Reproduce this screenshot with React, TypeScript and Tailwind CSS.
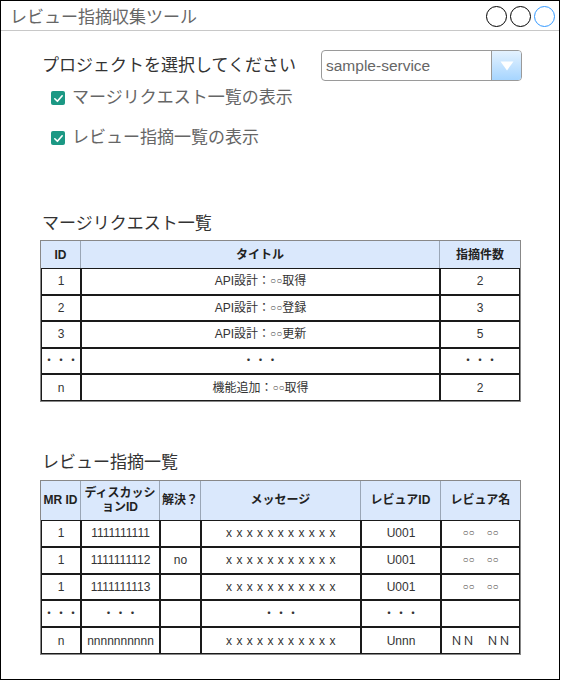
import React from "react";

const Circ = () => <span className="text-[10px] leading-none text-[#444]">○○</span>;

function Checkbox() {
  return (
    <span className="w-[14px] h-[14px] rounded-[2px] bg-[#1b9884] flex items-center justify-center shrink-0">
      <svg width="11" height="11" viewBox="0 0 12 12">
        <path d="M2 6.3 L4.8 9 L10 3" fill="none" stroke="white" strokeWidth="1.8" strokeLinecap="round" strokeLinejoin="round" />
      </svg>
    </span>
  );
}

function HCell({ children, last }: { children: React.ReactNode; last?: boolean }) {
  return (
    <div
      className={`flex items-center justify-center text-center font-bold text-[12px] leading-[14px] text-[#222] ${
        last ? "" : "border-r border-[#9aa6b6]"
      }`}
    >
      {children}
    </div>
  );
}

function BCell({ children, h }: { children?: React.ReactNode; h: string }) {
  return (
    <div className={`border border-[#1a1a1a] flex items-center justify-center text-[12px] text-[#333] ${h}`}>
      {children}
    </div>
  );
}

export default function App() {
  const mrRows: [React.ReactNode, React.ReactNode, React.ReactNode][] = [
    ["1", <>API設計：<Circ />取得</>, "2"],
    ["2", <>API設計：<Circ />登録</>, "3"],
    ["3", <>API設計：<Circ />更新</>, "5"],
    ["・・・", "・・・", "・・・"],
    ["n", <>機能追加：<Circ />取得</>, "2"],
  ];
  const xs = <span className="tracking-[0.5px]">x x x x x x x x x x x</span>;
  const name = (
    <>
      <Circ />　<Circ />
    </>
  );
  const rvRows: React.ReactNode[][] = [
    ["1", "1111111111", "", xs, "U001", name],
    ["1", "1111111112", "no", xs, "U001", name],
    ["1", "1111111113", "", xs, "U001", name],
    ["・・・", "・・・", "", "・・・", "・・・", ""],
    ["n", "nnnnnnnnnn", "", xs, "Unnn", "ＮＮ　ＮＮ"],
  ];

  return (
    <div className="w-[560px] h-[680px] border border-black bg-white flex flex-col font-[family-name:'Liberation_Sans','Noto_Sans_CJK_JP',sans-serif]">
      {/* title bar */}
      <div className="h-[30px] border-b border-[#c8c8c8] flex items-center justify-between pl-[9px] pr-[4px]">
        <span className="text-[17px] leading-[20px] text-[#666] font-['Noto_Sans_CJK_JP',sans-serif]">レビュー指摘収集ツール</span>
        <div className="flex gap-[3px] pt-[1px]">
          <span className="w-[21px] h-[21px] rounded-full border border-black" />
          <span className="w-[21px] h-[21px] rounded-full border border-black" />
          <span className="w-[21px] h-[21px] rounded-full border border-[#3399ff]" />
        </div>
      </div>

      <div className="pl-[39px] flex flex-col w-[521px]">
        {/* project row */}
        <div className="mt-[19px] h-[31px] flex items-center justify-between">
          <span className="ml-[2px] text-[17px] leading-[20px] text-[#333]">プロジェクトを選択してください</span>
          <div className="w-[201px] h-[31px] border border-[#9a9a9a] rounded-[4px] flex overflow-hidden">
            <span className="flex-1 flex items-center pl-[4px] text-[15.5px] text-[#666]">sample-service</span>
            <span className="w-[30px] border-l border-[#9a9a9a] bg-gradient-to-b from-[#e4f2ff] to-[#a6d5ff] flex items-center justify-center">
              <svg width="14" height="10" viewBox="0 0 14 10">
                <path d="M0.5 0.5 L13.5 0.5 L7 9.5 Z" fill="white" />
              </svg>
            </span>
          </div>
        </div>

        {/* checkboxes */}
        <div className="mt-[7px] h-[20px] flex items-center pl-[11px] gap-[7px]">
          <Checkbox />
          <span className="text-[17px] leading-[20px] text-[#666]">マージリクエスト一覧の表示</span>
        </div>
        <div className="mt-[20px] h-[20px] flex items-center pl-[11px] gap-[7px]">
          <Checkbox />
          <span className="text-[17px] leading-[20px] text-[#666]">レビュー指摘一覧の表示</span>
        </div>

        {/* MR list */}
        <div className="mt-[66px] h-[20px] pl-[2px] text-[17px] leading-[20px] text-[#333]">マージリクエスト一覧</div>
        <div className="mt-[6px] w-[481px] border border-[#888]">
          <div className="grid grid-cols-[40px_359px_80px] h-[27px] bg-[#dae8fc]">
            <HCell>ID</HCell>
            <HCell>タイトル</HCell>
            <HCell last>指摘件数</HCell>
          </div>
          {mrRows.map((r, i) => (
            <div key={i} className="grid grid-cols-[40px_359px_80px]">
              {r.map((c, j) => (
                <BCell key={j} h="h-[26.6px]">
                  {c}
                </BCell>
              ))}
            </div>
          ))}
        </div>

        {/* Review list */}
        <div className="mt-[51px] h-[20px] pl-[2px] text-[17px] leading-[20px] text-[#333]">レビュー指摘一覧</div>
        <div className="mt-[7px] w-[481px] border border-[#888]">
          <div className="grid grid-cols-[40px_79px_41px_160px_80px_79px] h-[39px] bg-[#dae8fc]">
            <HCell>MR ID</HCell>
            <HCell>
              ディスカッシ
              <br />
              ョンID
            </HCell>
            <HCell>解決？</HCell>
            <HCell>メッセージ</HCell>
            <HCell>レビュアID</HCell>
            <HCell last>レビュア名</HCell>
          </div>
          {rvRows.map((r, i) => (
            <div key={i} className="grid grid-cols-[40px_79px_41px_160px_80px_79px]">
              {r.map((c, j) => (
                <BCell key={j} h="h-[26.8px]">
                  {c}
                </BCell>
              ))}
            </div>
          ))}
        </div>
      </div>
    </div>
  );
}
